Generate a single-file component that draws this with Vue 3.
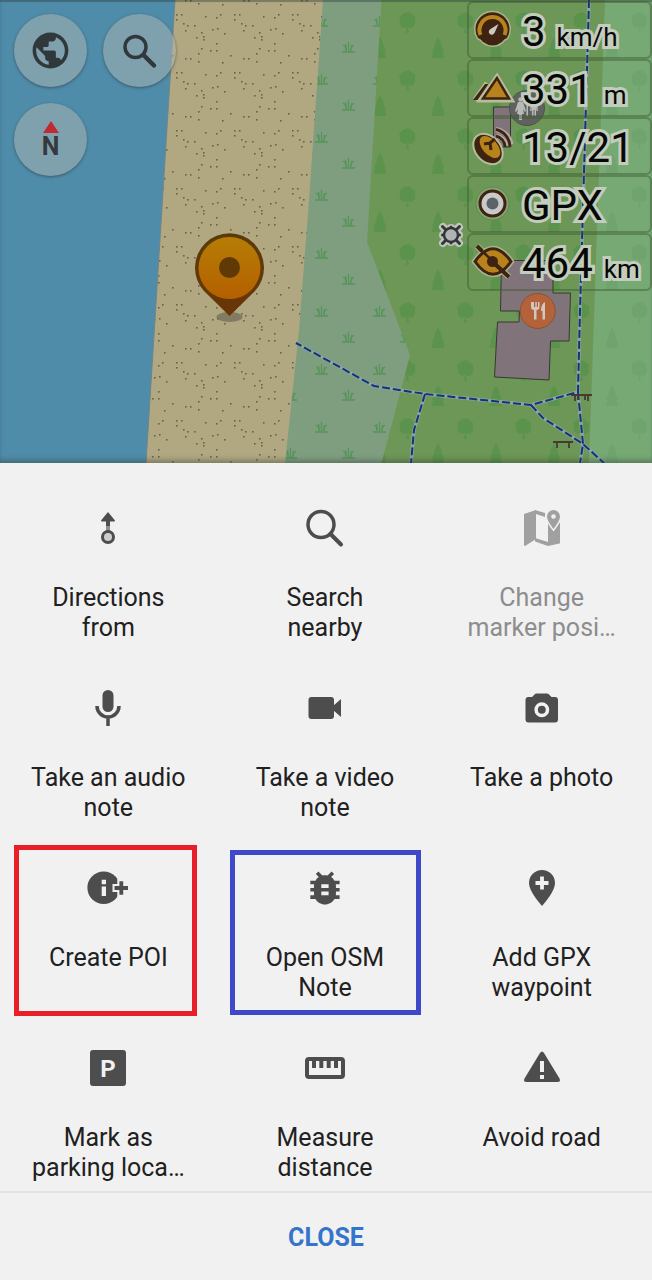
<script setup>
const readings = [
  { icon: 'speed', value: '3', unit: 'km/h' },
  { icon: 'altitude', value: '331', unit: 'm' },
  { icon: 'satellite', value: '13/21', unit: '' },
  { icon: 'record', value: 'GPX', unit: '' },
  { icon: 'eye', value: '464', unit: 'km' },
]

const actions = [
  { icon: 'from', label: 'Directions\nfrom' },
  { icon: 'search', label: 'Search\nnearby' },
  { icon: 'marker', label: 'Change\nmarker posi…', disabled: true },
  { icon: 'mic', label: 'Take an audio\nnote' },
  { icon: 'video', label: 'Take a video\nnote' },
  { icon: 'photo', label: 'Take a photo' },
  { icon: 'poi', label: 'Create POI', mark: 'red' },
  { icon: 'bug', label: 'Open OSM\nNote', mark: 'blue' },
  { icon: 'waypoint', label: 'Add GPX\nwaypoint' },
  { icon: 'parking', label: 'Mark as\nparking loca…' },
  { icon: 'ruler', label: 'Measure\ndistance' },
  { icon: 'warning', label: 'Avoid road' },
]

const sandDots = [
  [0, 15], [5, 15], [0, 20], [22, 4], [9, 1], [14, 1], [7, 24], [11, 26], [18, 26], [9, 31],
  [29, 17], [20, 38], [25, 33], [27, 37], [27, 40], [25, 49], [40, 18], [36, 30], [34, 51],
  [40, 51], [22, 54], [54, 56], [48, 34], [44, 15], [41, 29], [40, 44], [46, 5],
]
</script>

<template>
  <div class="screen">
    <section class="map" aria-label="Map">
      <svg class="terrain" viewBox="0 0 652 463" preserveAspectRatio="xMidYMin slice" aria-hidden="true">
        <defs>
          <pattern id="sand" x="176" y="0" width="58" height="58" patternUnits="userSpaceOnUse">
            <rect width="58" height="58" fill="#b1a882" />
            <rect v-for="(d, i) in sandDots" :key="i" :x="d[0]" :y="d[1] - 1" width="1.6" height="1.6" fill="#68624d" />
          </pattern>
          <pattern id="grass" x="306" y="0" width="58" height="58" patternUnits="userSpaceOnUse">
            <rect width="58" height="58" fill="#7f9e80" />
            <g fill="none" stroke="#579459" stroke-width="1.3">
              <path d="M9 26h13M15.500 26v-10M13 25c0-3-1-5-3-6M18 25c0-3 1-5 3-6M13.500 25l-1-7M17.500 25l1-6" />
              <path d="M36 52h13M42.500 52v-10M40 51c0-3-1-5-3-6M45 51c0-3 1-5 3-6M40.500 51l-1-7M44.500 51l1-6" />
            </g>
          </pattern>
          <pattern id="forest" x="365" y="0" width="58" height="58" patternUnits="userSpaceOnUse">
            <rect width="58" height="58" fill="#6c9757" />
            <g fill="#5b924c">
              <path d="M15 37l4 8h-1l3 7h-1l2 9h-6v2h-2v-2H8l2-9H9l3-7h-1z" />
              <path d="M40 13q5-2 7 2 4 1 3 5 1 4-2 7-3 2-5 0l1 6h-3l1-6q-4 2-6-1-2-2-1-5-2-5 2-6 1-2 3-2z" />
            </g>
          </pattern>
          <pattern id="park" x="365" y="0" width="58" height="58" patternUnits="userSpaceOnUse">
            <rect width="58" height="58" fill="#76a974" />
            <g fill="#70a46e">
              <path d="M15 37l4 8h-1l3 7h-1l2 9h-6v2h-2v-2H8l2-9H9l3-7h-1z" />
              <path d="M40 13q5-2 7 2 4 1 3 5 1 4-2 7-3 2-5 0l1 6h-3l1-6q-4 2-6-1-2-2-1-5-2-5 2-6 1-2 3-2z" />
            </g>
          </pattern>
          <linearGradient id="pin" x1="0" y1="0" x2="0" y2="1">
            <stop offset="0" stop-color="#b67d06" />
            <stop offset="1" stop-color="#b46000" />
          </linearGradient>
          <linearGradient id="pinEdge" x1="0" y1="0" x2="0" y2="1">
            <stop offset="0" stop-color="#5a3b08" />
            <stop offset="1" stop-color="#6a3506" />
          </linearGradient>
        </defs>
        <rect width="652" height="463" fill="#4f8ca9" />
        <path d="M175 0H330V463H146z" fill="url(#sand)" />
        <path d="M175 0L146 463" stroke="#6e858a" stroke-width="1" />
        <path d="M323 0H450V463H285L299 330L309 200z" fill="url(#grass)" />
        <path d="M381.500 0H652V463H381.500L410 355L367 242z" fill="url(#forest)" />
        <path d="M605 0H652V463H589L597 230z" fill="url(#park)" />

        <g fill="#80747a" stroke="#37392f" stroke-width="1">
          <path d="M493.500 107h17v40h-17z" />
          <path d="M501.500 260.500H553V293h17.500l-1.500 48h-18.500l-1.500 39-54.500-3 3-55H519l.5-11h-19z" />
        </g>

        <g fill="none">
          <g stroke="#89a79c" stroke-width="3.500">
            <path d="M589 0L580 310L578 392L531 405L425 394L374 386L296 343" />
            <path d="M425 394L414 430L411 463M531 405L543 418L583 444L604 463M578 392L583 444L580 463" />
          </g>
          <g stroke="#15317d" stroke-width="2" stroke-dasharray="8 3">
            <path d="M589 0L580 310L578 392L531 405L425 394L374 386L296 343" />
            <path d="M425 394L414 430L411 463M531 405L543 418L583 444L604 463M578 392L583 444L580 463" />
          </g>
          <path d="M571 395h21M575 396v5M578 396v4M585 396v4M588 396v5M553 442h20M557 443v5M569 443v5" stroke="#473a35" stroke-width="1.800" />
        </g>

        <circle cx="527" cy="108" r="17.500" fill="#5f625f" stroke="#4b544a" />
        <g fill="#b8bab7">
          <circle cx="520.500" cy="99.500" r="2.200" />
          <path d="M518 102h5l3 9-1 1-2-3 1 5h-2v6h-1.500v-5v5H519v-6h-2l1-5-2 3-1-1z" />
          <path d="M526.500 100h1.500v16h-1.500z" />
          <circle cx="534" cy="100.500" r="2.200" />
          <path d="M531 103h6l1 8h-1.500l-.5-4v9h-1.500v-6h-1v6H532v-9l-.5 4H530z" />
        </g>

        <circle cx="537.700" cy="311" r="17.500" fill="#b3623a" stroke="#8f5030" />
        <path d="M531 302v5q0 3 3 3v9.500h2.500V310q3 0 3-3v-5h-1.500v5h-1.200v-5h-1.500v5h-1.300v-5h-1.500v5H532.500v-5zM545 302q-4 2-4 9h1.500v8.500h2.500z" fill="#d2c6bd" />

        <g stroke-linecap="round">
          <path d="M443 227l16 16M459 227l-16 16M451 228v14M443 235h16" stroke="#c0c5bb" stroke-width="8" />
          <circle cx="451" cy="235" r="10" fill="#c0c5bb" />
          <path d="M442.500 226.500l17 17M459.500 226.500l-17 17M451 227v16M442.500 235h17" stroke="#32363b" stroke-width="3" />
          <circle cx="451" cy="235" r="7" fill="#b1b2b3" stroke="#32363b" stroke-width="2.500" />
        </g>

        <ellipse cx="229.500" cy="317" rx="13" ry="5" fill="#726c57" opacity=".75" />
        <path d="M229.500 316L204 291A34.500 34.500 0 1 1 255 291z" fill="url(#pinEdge)" />
        <circle cx="229.500" cy="268" r="31" fill="url(#pin)" />
        <circle cx="229.500" cy="267.500" r="10.500" fill="#603905" />
      </svg>

      <div class="controls">
        <button type="button" class="round" aria-label="Configure map">
          <svg width="43" height="43" viewBox="0 0 24 24" fill="#31383c">
            <path d="M12 2C6.480 2 2 6.480 2 12s4.480 10 10 10 10-4.480 10-10S17.520 2 12 2zm-1 17.930c-3.950-.49-7-3.850-7-7.930 0-.62.080-1.210.210-1.790L9 15v1c0 1.100.9 2 2 2v1.930zm6.900-2.540c-.26-.81-1-1.390-1.900-1.390h-1v-3c0-.55-.45-1-1-1H8v-2h2c.55 0 1-.45 1-1V7h2c1.100 0 2-.9 2-2v-.41c2.930 1.190 5 4.060 5 7.410 0 2.080-.8 3.970-2.100 5.390z" />
          </svg>
        </button>
        <button type="button" class="round" aria-label="Search">
          <svg width="44" height="44" viewBox="0 0 44 44" fill="none" stroke="#31383c">
            <circle cx="17.500" cy="18" r="10.500" stroke-width="3.500" />
            <path d="M26 26.500L36 36.500" stroke-width="4.500" stroke-linecap="round" />
          </svg>
        </button>
        <button type="button" class="round compass" aria-label="Compass, north">
          <svg width="16" height="12" viewBox="0 0 16 12"><path d="M8 0l8 12H0z" fill="#c12a32" /></svg>
          <span>N</span>
        </button>
      </div>

      <ul class="readings">
        <li v-for="r in readings" :key="r.icon">
          <svg width="44" height="44" viewBox="0 0 44 44" aria-hidden="true">
            <template v-if="r.icon === 'speed'">
              <path d="M7 30A17 17 0 1 1 36 30Q33 31 31 34Q22 41 12 34Q10 31 7 30z" fill="#3d2310" stroke="#a9b48d" stroke-width="3" paint-order="stroke" />
              <path d="M9.500 27A13 13 0 1 1 33.500 27" fill="none" stroke="#b8831c" stroke-width="4" />
              <circle cx="21.500" cy="24" r="10" fill="#3d2310" />
              <path d="M27.500 16l-4 9a3 3 0 1 1-4-4z" fill="#cbc8c4" />
            </template>
            <template v-else-if="r.icon === 'altitude'">
              <path d="M16 17L4 34M26 11L10 34H40z" fill="none" stroke="#b9bc9a" stroke-width="5" />
              <path d="M14 18h3.500L6.500 34H2z" fill="#3d2310" />
              <path d="M26 12L12 32.500H38z" fill="#b8831c" stroke="#3d2310" stroke-width="2.500" />
            </template>
            <template v-else-if="r.icon === 'satellite'">
              <ellipse cx="17" cy="25" rx="11.500" ry="16" transform="rotate(-42 17 25)" fill="#3d2310" stroke="#b9bc9a" stroke-width="4" paint-order="stroke" />
              <ellipse cx="19" cy="23" rx="7.500" ry="13" transform="rotate(-42 19 23)" fill="#b8831c" />
              <path d="M13 20l6-1 5-4M19 19l1 7" fill="none" stroke="#3d2310" stroke-width="3" />
              <path d="M25 12a12 12 0 0 1 10 10M25 5.500a18 18 0 0 1 15 15" fill="none" stroke="#b5aaa9" stroke-width="5" />
              <path d="M25 12a12 12 0 0 1 9 11M25 5.500a18 18 0 0 1 14 17" fill="none" stroke="#3d2310" stroke-width="3" />
            </template>
            <template v-else-if="r.icon === 'record'">
              <circle cx="21.500" cy="21.500" r="16.500" fill="#86a173" stroke="#5d8a4c" />
              <circle cx="21.500" cy="21.500" r="12.500" fill="#c9c9c9" stroke="#3d2310" stroke-width="3" />
              <circle cx="21.500" cy="21.500" r="6" fill="#5a6367" />
            </template>
            <template v-else>
              <path d="M4 21.500Q22-4 40 21.500Q22 47 4 21.500zM6 6L38 37" fill="none" stroke="#a9b48d" stroke-width="6" />
              <path d="M4 21.500Q22-4 40 21.500Q22 47 4 21.500z" fill="#b8831c" stroke="#3d2310" stroke-width="3" />
              <circle cx="21.500" cy="21.500" r="5.500" fill="#3d2310" />
              <path d="M6 6l5 5M25 25L38 37" stroke="#3d2310" stroke-width="4" />
              <path d="M9 9L36 35" stroke="#3d2310" stroke-width="2.500" />
            </template>
          </svg>
          <span class="value">{{ r.value }}</span>
          <span v-if="r.unit" class="unit">{{ r.unit }}</span>
        </li>
      </ul>
    </section>

    <section class="sheet" aria-label="Actions">
      <div class="grid">
        <button v-for="a in actions" :key="a.icon" type="button" class="action" :disabled="a.disabled">
          <svg width="48" height="48" viewBox="0 0 48 48" fill="currentColor" aria-hidden="true">
            <template v-if="a.icon === 'from'">
              <path d="M24 8l7 8.500q0 1-1 1H18q-1 0-1-1z" />
              <path d="M22 17h4v5h-4z" />
              <path d="M22 22h4v6h-4z" opacity=".6" />
              <circle cx="24" cy="33" r="5.500" fill="#cecece" stroke="currentColor" stroke-width="3" />
            </template>
            <template v-else-if="a.icon === 'search'">
              <circle cx="20" cy="20.500" r="13" fill="none" stroke="currentColor" stroke-width="3.500" />
              <path d="M29.500 30L40 40.500" stroke="currentColor" stroke-width="4" stroke-linecap="round" />
            </template>
            <template v-else-if="a.icon === 'marker'">
              <path d="M6 10L18 6v29L7 42q-1 0-1-1z" />
              <path d="M17 6l10 3v4l-9-3zM17 34l13 4v4l-13-4.500zM30 18l5.500 9L42 18v21q0 .5-.5 .5L30 42z" />
              <path d="M35.500 25Q29 16.500 29 12.500A6.500 6.500 0 0 1 42 12.500Q42 16.500 35.500 25z" stroke="#f1f1f1" stroke-width="3" paint-order="stroke" />
              <circle cx="35.500" cy="12.500" r="2.300" fill="#f1f1f1" />
            </template>
            <template v-else-if="a.icon === 'mic'">
              <rect x="18.500" y="6" width="11" height="22" rx="5.500" />
              <path d="M13 22a11 11 0 0 0 22 0M24 33v9" fill="none" stroke="currentColor" stroke-width="3.500" />
            </template>
            <template v-else-if="a.icon === 'video'">
              <rect x="7.500" y="13" width="25.500" height="22" rx="3" />
              <path d="M32 22l8-7v18l-8-7z" />
            </template>
            <template v-else-if="a.icon === 'photo'">
              <path d="M10.500 13H14l3-3q.5-.5 1.500-.5h10.500q1 0 1.500 .5l3 3h3.500q3 0 3 3v19.500q0 3-3 3h-26.500q-3 0-3-3V16q0-3 3-3z" />
              <circle cx="23.800" cy="25.700" r="5.700" fill="none" stroke="#f1f1f1" stroke-width="3.500" />
            </template>
            <template v-else-if="a.icon === 'poi'">
              <circle cx="19.700" cy="23.800" r="16.300" />
              <path d="M17.700 15.700h4.300v4.500h-4.300zM17.700 22.500h4.300V32h-4.300z" fill="#f1f1f1" />
              <path d="M37.300 15v18" stroke="#f1f1f1" stroke-width="8" />
              <path d="M28.500 24H44" stroke="#f1f1f1" stroke-width="8" />
              <path d="M37.300 17.200v13.600M30.500 24H44" stroke="currentColor" stroke-width="3.800" />
            </template>
            <template v-else-if="a.icon === 'bug'">
              <path transform="translate(2 2) scale(1.830)" d="M20 8h-2.810c-.45-.78-1.070-1.450-1.820-1.960L17 4.410 15.590 3l-2.170 2.170C12.960 5.060 12.490 5 12 5s-.96.060-1.410.170L8.410 3 7 4.410l1.620 1.630C7.880 6.550 7.260 7.220 6.810 8H4v2h2.090c-.05.33-.09.66-.09 1v1H4v2h2v1c0 .34.040.67.090 1H4v2h2.810c1.040 1.790 2.970 3 5.190 3s4.150-1.210 5.190-3H20v-2h-2.090c.050-.33.090-.66.090-1v-1h2v-2h-2v-1c0-.34-.04-.67-.09-1H20V8zm-6 8h-4v-2h4v2zm0-4h-4v-2h4v2z" />
            </template>
            <template v-else-if="a.icon === 'waypoint'">
              <path d="M24 42Q11 27 11 19A13 13 0 0 1 37 19Q37 27 24 42z" />
              <path d="M24 12.500v13M17.500 19h13" stroke="#f1f1f1" stroke-width="3.800" />
            </template>
            <template v-else-if="a.icon === 'parking'">
              <rect x="6" y="6" width="36" height="36" rx="3" />
              <text x="24" y="32.500" text-anchor="middle" class="letter">P</text>
            </template>
            <template v-else-if="a.icon === 'ruler'">
              <rect x="6" y="15" width="36" height="18" rx="2" fill="none" stroke="currentColor" stroke-width="4" />
              <path d="M13 15v9M20.300 15v9M27.700 15v9M35 15v9" stroke="currentColor" stroke-width="4" />
            </template>
            <template v-else>
              <path d="M22 9q2-3 4 0l15.500 25.500q1.500 3.500-2 3.500h-31q-3.500 0-2-3.500z" />
              <path d="M22 17h4v11h-4zM22 31h4v4h-4z" fill="#f1f1f1" />
            </template>
          </svg>
          <span class="label">{{ a.label }}</span>
          <i v-if="a.mark" class="mark" :class="a.mark"></i>
        </button>
      </div>
      <button type="button" class="close">CLOSE</button>
    </section>
  </div>
</template>

<style>
body {
  background: #f1f1f1;
}
</style>

<style scoped>
.screen {
  display: flex;
  flex-direction: column;
  min-height: 100vh;
  font-family: Roboto, "Liberation Sans", sans-serif;
  color: #212121;
}

button {
  margin: 0;
  padding: 0;
  border: 0;
  background: none;
  font: inherit;
  color: inherit;
}

.map {
  position: relative;
  flex: 1;
  display: flex;
  justify-content: space-between;
  align-items: flex-start;
  min-height: 292px;
  overflow: hidden;
  background: #4f8ca9;
}

.map::after {
  content: "";
  position: absolute;
  inset: 0;
  box-shadow: inset 0 2px 1px rgba(40, 55, 50, 0.4), inset 0 -5px 5px -2px rgba(50, 60, 50, 0.4);
  pointer-events: none;
}

.terrain {
  position: absolute;
  inset: 0;
  width: 100%;
  height: 100%;
}

.controls {
  position: relative;
  display: grid;
  grid-template-columns: 73px 73px;
  gap: 16px;
  padding: 14px;
}

.round {
  display: flex;
  flex-direction: column;
  align-items: center;
  justify-content: center;
  height: 73px;
  border-radius: 50%;
  background: rgba(175, 180, 178, 0.5);
  box-shadow: 0 1px 3px rgba(50, 65, 75, 0.7);
}

.compass {
  gap: 2px;
  font-size: 25px;
  line-height: 24px;
  font-weight: 700;
  color: #34393c;
}

.readings {
  position: relative;
  width: 185px;
  margin: 1px 0 0;
  padding: 0;
  list-style: none;
}

.readings li {
  display: flex;
  align-items: center;
  box-sizing: border-box;
  height: 58px;
  padding-left: 2px;
  border: 2px solid rgba(62, 88, 48, 0.45);
  border-radius: 6px;
}

.value,
.unit {
  padding-top: 4px;
  color: #060806;
  line-height: 48px;
  white-space: nowrap;
  -webkit-text-stroke: 6px #c3ccbd;
  paint-order: stroke fill;
  stroke-linejoin: round;
}

.value {
  margin-left: 7px;
  font-size: 42px;
}

.unit {
  margin-left: 11px;
  padding-top: 13px;
  font-size: 26px;
}

.sheet {
  background: #f1f1f1;
}

.grid {
  display: grid;
  grid-template-columns: repeat(3, minmax(0, 1fr));
  grid-auto-rows: 180px;
  padding: 0 2px 8px 0;
  border-bottom: 2px solid #e3e3e3;
}

.action {
  position: relative;
  display: flex;
  flex-direction: column;
  align-items: center;
  gap: 31px;
  padding-top: 41px;
}

.action svg {
  flex: none;
  color: #4d4d4d;
}

.action:disabled svg {
  color: #a0a0a0;
}

.action:disabled .label {
  color: #8d8d8d;
}

.label {
  font-size: 25px;
  line-height: 30px;
  text-align: center;
  white-space: pre-line;
}

.letter {
  fill: #f1f1f1;
  font-size: 24px;
  font-weight: 700;
}

.mark {
  position: absolute;
  border: 5px solid;
}

.red {
  inset: 22px 20px -13px 14px;
  border-color: #e81f27;
}

.blue {
  inset: 27px 12px -12px 13px;
  border-color: #3f48c8;
}

.close {
  display: block;
  width: 100%;
  padding: 30px 0 27px;
  font-size: 25px;
  line-height: 30px;
  font-weight: 700;
  color: #3475cc;
}
</style>
